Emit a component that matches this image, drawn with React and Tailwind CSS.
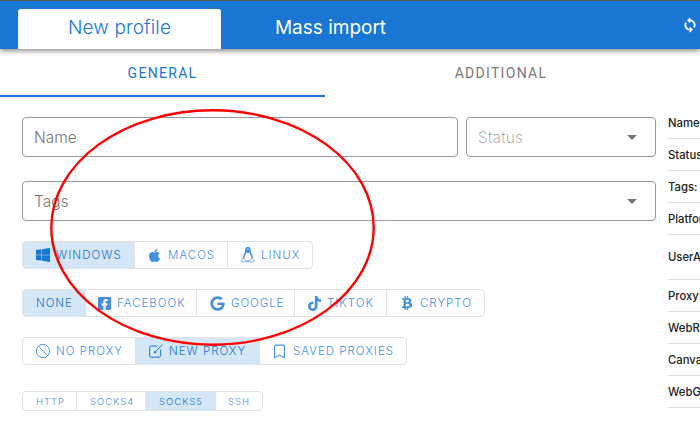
import { FaApple, FaFacebookSquare, FaGoogle, FaTiktok, FaBtc } from 'react-icons/fa';
import { Ban, Bookmark } from 'lucide-react';

function SyncIcon() {
  return (
    <svg className="mb-4 ml-[242px] shrink-0" width="16" height="16" viewBox="0 0 24 24" fill="white" stroke="white" strokeWidth="0.8">
      <path d="M12 4V1L8 5l4 4V6c3.31 0 6 2.69 6 6 0 1.01-.25 1.97-.7 2.8l1.46 1.46A7.93 7.93 0 0 0 20 12c0-4.42-3.58-8-8-8zm0 14c-3.31 0-6-2.69-6-6 0-1.01.25-1.97.7-2.8L5.24 7.74A7.93 7.93 0 0 0 4 12c0 4.42 3.58 8 8 8v3l4-4-4-4v3z" />
    </svg>
  );
}

function WindowsIcon() {
  return (
    <svg width="14" height="14" viewBox="0 0 14 14" fill="currentColor">
      <path d="M0 2.1 5.3 1.3V6.7H0zM5.8 1.2 14 0V6.7H5.8zM0 7.2H5.3V12.6L0 11.9zM5.8 7.2H14V14L5.8 12.7z" />
    </svg>
  );
}

function TuxIcon() {
  return (
    <svg width="14" height="16" viewBox="0 0 14 16" fill="none" stroke="currentColor" strokeWidth="0.8">
      <path d="M4.8 5V3.4C4.8 1.7 5.7 .7 6.9 .7S9 1.7 9 3.4V5c.3 1.8 2.3 3.4 2.3 6.2M4.8 5c-.3 1.8-2.3 3.4-2.3 6.2" strokeWidth="1.6" />
      <path d="M5.2 13.9c1.2.5 2.3.5 3.5 0" strokeWidth="1.2" />
      <path d="M5.1 2.8h3.6v2L6.9 6 5.1 4.8z" fill="currentColor" />
      <path d="M2.5 10.9 4.9 13.6c.5 1.4-.8 2-1.8 1.5L.6 14.2l.3-1.9zM11.3 10.9 8.9 13.6c-.5 1.4.8 2 1.8 1.5l2.6-1.1-.5-1.8z" fill="white" strokeWidth="0.7" />
    </svg>
  );
}

function EditIcon() {
  return (
    <svg width="14" height="14" viewBox="0 0 14 14" fill="none" stroke="currentColor" strokeWidth="1" strokeLinecap="round" strokeLinejoin="round">
      <path d="M8 2H2Q.7 2 .7 3.3V11.5Q.7 13.2 2.4 13.2H10Q11.7 13.2 11.7 11.5V6M5.6 8.6 13.2 .9M5.6 8.6V7.4M5.6 8.6H6.8" />
    </svg>
  );
}

function Choice({ width, pad = 'pl-[13px]', gap = 'gap-[5px]', icon, label, tracking = 'tracking-[1px]', active, small }) {
  return (
    <div className={`flex shrink-0 items-center border-r border-[#e2e2e2] last:border-r-0 ${width} ${pad} ${gap} ${active ? 'bg-[#d5e6f7] text-[#1976d2]' : 'text-[#4490de]'}`}>
      {icon}
      <span className={`whitespace-nowrap ${small ? 'pt-px text-[9.5px] leading-[18px]' : 'text-[11.5px] leading-[26px]'} font-light ${tracking}`}>{label}</span>
    </div>
  );
}

function Group({ className, children }) {
  return <div className={`flex w-fit overflow-hidden rounded border border-[#e2e2e2] ${className}`}>{children}</div>;
}

function Caret() {
  return <span className="h-0 w-0 border-x-[5px] border-t-[5px] border-x-transparent border-t-[#757575]" />;
}

const details = [
  ['Name:', 'h-8'],
  ['Status:', 'h-8'],
  ['Tags:', 'h-8'],
  ['Platform:', 'h-8'],
  ['UserAgent:', 'h-[45px]'],
  ['Proxy:', 'h-8'],
  ['WebRTC:', 'h-8'],
  ['Canvas:', 'h-8'],
  ['WebGL:', 'h-8'],
];

export default function App() {
  return (
    <div className="relative h-[429px] w-[700px] overflow-hidden bg-white font-['Inter','Roboto',sans-serif]">
      <header className="relative flex h-[49px] items-end border-t border-[#555] bg-[#1976d2] pl-[18px] shadow-[0_2px_5px_rgba(0,0,0,0.45)]">
        <div className="flex h-10 w-[203px] items-center justify-center rounded-t-[3px] bg-white pb-[2px] text-[19px] tracking-[0.15px] text-[#1976d2] font-light">
          New profile
        </div>
        <div className="flex h-10 w-[219px] items-center justify-center pb-[2px] text-[19px] text-white">
          Mass import
        </div>
        <SyncIcon />
      </header>
      <nav className="flex h-12 w-[677px] font-['Roboto','Inter',sans-serif] text-[14px] tracking-[1.3px]">
        <div className="flex w-[325px] items-center justify-center border-b-2 border-[#1976d2] pt-[2px] text-[#1976d2]">GENERAL</div>
        <div className="flex flex-1 items-center justify-center text-[#777]">ADDITIONAL</div>
      </nav>
      <div className="flex">
        <main className="ml-[22px] w-[634px] shrink-0 pt-5">
          <div className="flex gap-2">
            <div className="flex h-10 w-[436px] items-center rounded border border-[#999] px-[11px] pt-px text-[15.5px] font-light text-[#777]">Name</div>
            <div className="flex h-10 w-[190px] items-center justify-between rounded border border-[#999] pr-[18px] pl-[11px] text-[15.5px] font-extralight text-[#999]">
              <span className="pt-px tracking-[0.3px]">Status</span> <Caret />
            </div>
          </div>
          <div className="mt-6 flex h-10 items-center justify-between rounded border border-[#999] pr-[18px] pl-[11px] text-[15.5px] font-light text-[#777]">
            <span className="pt-px">Tags</span> <Caret />
          </div>
          <Group className="mt-5 h-7">
            <Choice width="w-[112px]" icon={<WindowsIcon />} gap="gap-[6px]" label="WINDOWS" tracking="tracking-[1.1px]" active />
            <Choice width="w-[93px]" pad="pl-[12px]" icon={<FaApple size={15} />} gap="gap-[6px]" label="MACOS" />
            <Choice width="w-[84px]" icon={<TuxIcon />} gap="gap-[6px]" label="LINUX" />
          </Group>
          <Group className="mt-5 h-7">
            <Choice width="w-[63px]" label="NONE" tracking="tracking-[0.9px]" active />
            <Choice width="w-[111px]" pad="pl-[11px]" icon={<FaFacebookSquare size={15} />} label="FACEBOOK" />
            <Choice width="w-[98px]" icon={<FaGoogle size={15} />} gap="gap-[6px]" label="GOOGLE" tracking="tracking-[0.9px]" />
            <Choice width="w-[92px]" pad="pl-[12px]" icon={<FaTiktok size={15} />} label="TIKTOK" />
            <Choice width="w-[97px]" icon={<FaBtc size={14} />} gap="gap-[6px]" label="CRYPTO" />
          </Group>
          <Group className="mt-5 h-7">
            <Choice width="w-[113px]" pad="pl-[12px]" icon={<Ban size={16} strokeWidth={1.4} />} label="NO PROXY" />
            <Choice width="w-[124px]" icon={<EditIcon />} gap="gap-[6px]" label="NEW PROXY" tracking="tracking-[1px]" active />
            <Choice width="w-[146px]" pad="pl-[11px]" icon={<Bookmark size={17} strokeWidth={1.5} />} label="SAVED PROXIES" />
          </Group>
          <Group className="mt-[26px] h-5">
            <Choice width="w-[54px]" label="HTTP" small />
            <Choice width="w-[69px]" label="SOCKS4" small />
            <Choice width="w-[70px]" label="SOCKS5" small active />
            <Choice width="w-[46px]" pad="pl-[12px]" label="SSH" small />
          </Group>
        </main>
        <aside className="ml-3 w-[90px] shrink-0 pt-[10px]">
          {details.map(([label, height]) => (
            <div key={label} className={`flex items-center border-b border-[#ddd] pt-px text-[11.3px] font-medium text-[#222] ${height}`}>{label}</div>
          ))}
        </aside>
      </div>
      <svg className="pointer-events-none absolute inset-0" width="700" height="429" fill="none">
        <ellipse cx="212.5" cy="227.5" rx="161.2" ry="117.2" stroke="#ff0000" strokeWidth="2.4" />
      </svg>
    </div>
  );
}
